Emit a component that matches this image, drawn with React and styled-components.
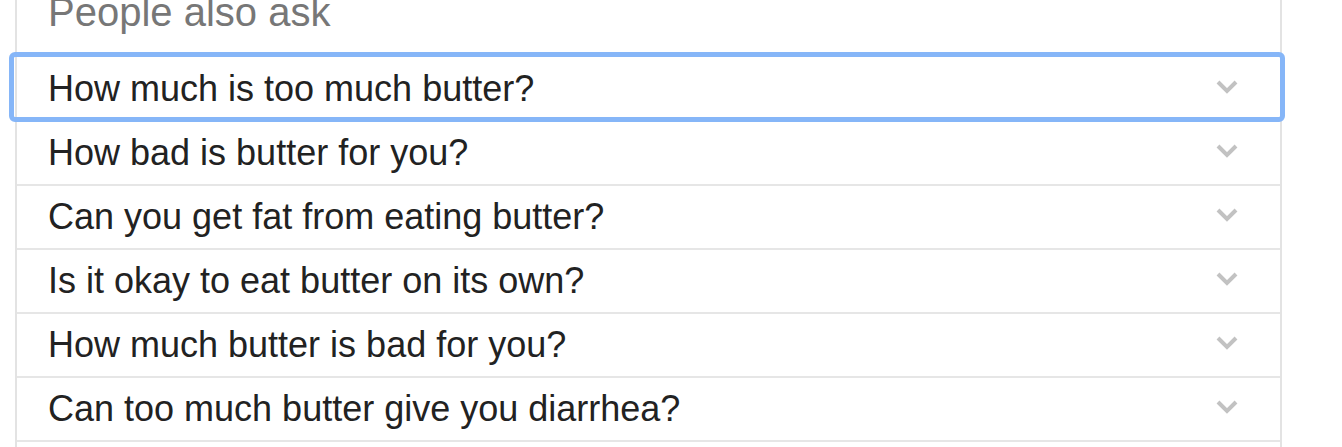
import React from "react";
import styled, { createGlobalStyle } from "styled-components";

const GlobalStyle = createGlobalStyle`
  html, body {
    margin: 0;
    padding: 0;
    background: #ffffff;
    overflow: hidden;
  }
  body {
    font-family: "Liberation Sans", Arial, sans-serif;
  }
`;

const questions = [
  "How much is too much butter?",
  "How bad is butter for you?",
  "Can you get fat from eating butter?",
  "Is it okay to eat butter on its own?",
  "How much butter is bad for you?",
  "Can too much butter give you diarrhea?",
];

const Panel = styled.div`
  margin-left: 15px;
  width: 1267px;
  box-sizing: border-box;
  padding-bottom: 24px;
  border-left: 2px solid #e3e3e3;
  border-right: 2px solid #e3e3e3;
`;

const Heading = styled.h2`
  margin: -11px 0 0;
  padding: 0 0 23px 31px;
  font-size: 40px;
  line-height: 46px;
  font-weight: normal;
  color: #777777;
`;

const Row = styled.div`
  position: relative;
  height: 64px;
  box-sizing: border-box;
  border-bottom: 2px solid #e6e6e6;
  display: flex;
  align-items: center;
  justify-content: space-between;
  padding: 0 41px 0 31px;

  &::after {
    content: "";
    display: ${(p) => (p.$focused ? "block" : "none")};
    position: absolute;
    top: -6px;
    bottom: -2px;
    left: -8px;
    right: -5px;
    border: 5px solid #86b6f8;
    border-radius: 6px;
    pointer-events: none;
  }
`;

const Question = styled.span`
  font-size: 36px;
  color: #222222;
  white-space: nowrap;
`;

const Chevron = styled.svg`
  width: 24px;
  height: 16px;
  flex-shrink: 0;
  margin-top: -4px;
`;

const ExpandIcon = () => (
  <Chevron viewBox="0 0 24 16">
    <polyline
      points="3,3 12,12 21,3"
      fill="none"
      stroke="#c2c2c2"
      strokeWidth="4"
    />
  </Chevron>
);

const App = () => {
  return (
    <>
      <GlobalStyle />
      <Panel>
        <Heading>People also ask</Heading>
        {questions.map((q, i) => (
          <Row key={q} $focused={i === 0}>
            <Question>{q}</Question>
            <ExpandIcon />
          </Row>
        ))}
      </Panel>
    </>
  );
};

export default App;
